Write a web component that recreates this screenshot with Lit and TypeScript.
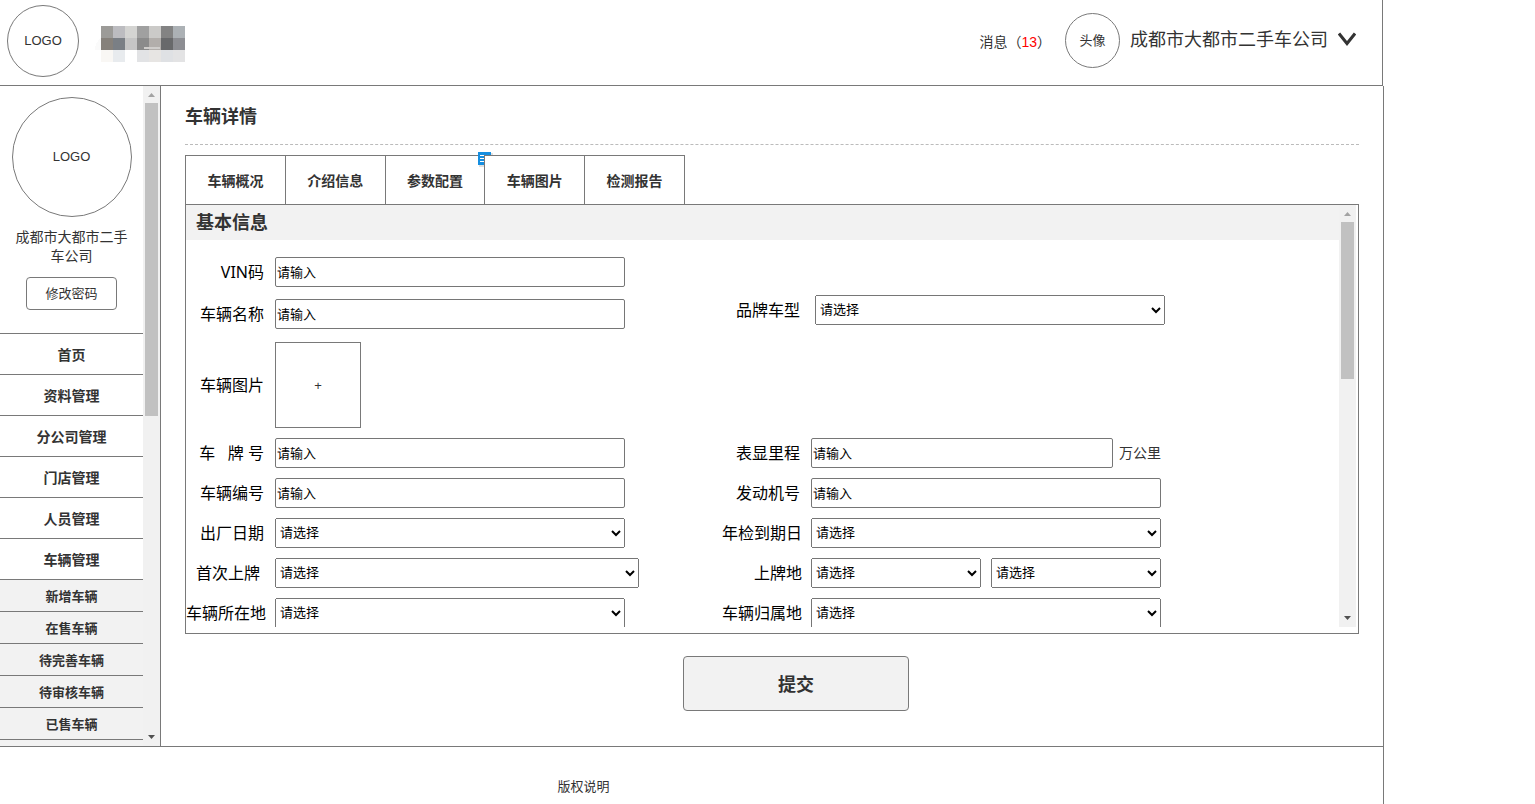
import { LitElement, html, svg, css, nothing } from "lit";
import { customElement, property } from "lit/decorators.js";
import { styleMap } from "lit/directives/style-map.js";
import { classMap } from "lit/directives/class-map.js";

@customElement("scroll-track")
class ScrollTrack extends LitElement {
  @property({ type: Number }) size = 40;

  static styles = css`
    :host {
      display: flex;
      flex-direction: column;
      flex: none;
      width: 17px;
      background: #f1f1f1;
    }
    .arrow {
      display: block;
      flex: none;
      width: 17px;
      height: 17px;
    }
    .rail {
      flex: 1;
      min-height: 0;
      padding: 0 2px;
    }
    .thumb {
      background: #c1c1c1;
    }
  `;

  render() {
    return html`
      <svg class="arrow" viewBox="0 0 17 17" aria-hidden="true"><path d="M5 11h7L8.500 7z" fill="#a3a3a3" /></svg>
      <div class="rail"><div class="thumb" style=${styleMap({ height: `${this.size}%` })}></div></div>
      <svg class="arrow" viewBox="0 0 17 17" aria-hidden="true"><path d="M5 6h7L8.500 10z" fill="#505050" /></svg>
    `;
  }
}

type Field = {
  id: string;
  label: string;
  kind: "text" | "select" | "pair" | "photo";
  unit?: string;
  look?: string;
};

const ROWS: { look?: string; left: Field; right?: Field }[] = [
  { left: { id: "vin", label: "VIN码", kind: "text" } },
  {
    look: "stagger",
    left: { id: "name", label: "车辆名称", kind: "text" },
    right: { id: "brand", label: "品牌车型", kind: "select", look: "inset" },
  },
  { look: "tall", left: { id: "photo", label: "车辆图片", kind: "photo" } },
  {
    left: { id: "plate", label: "车\u00a0\u00a0\u00a0牌\u00a0号", kind: "text" },
    right: { id: "mileage", label: "表显里程", kind: "text", unit: "万公里" },
  },
  {
    left: { id: "code", label: "车辆编号", kind: "text" },
    right: { id: "engine", label: "发动机号", kind: "text" },
  },
  {
    left: { id: "made", label: "出厂日期", kind: "select" },
    right: { id: "inspect", label: "年检到期日", kind: "select", look: "flush" },
  },
  {
    left: { id: "first", label: "首次上牌", kind: "select", look: "long" },
    right: { id: "region", label: "上牌地", kind: "pair", look: "flush" },
  },
  {
    left: { id: "place", label: "车辆所在地", kind: "select", look: "flush" },
    right: { id: "home", label: "车辆归属地", kind: "select", look: "flush" },
  },
];

const MOSAIC = [
  "#9c9b98", "#bcbcc0", "#d4d4d2", "#a0a0a0", "#cbcac8", "#838383", "#acb1b5",
  "#86817b", "#7a7f85", "#c5c5c5", "#8b8b8b", "#b2aeab", "#68696b", "#8d8e93",
  "#f9f7f4", "#e8ebee", "#ffffff", "#e2e3e5", "#e7e5e3", "#dfe1e4", "#e3e3e4",
];

const mosaicCell = (fill: string, i: number) =>
  svg`<rect x=${6 + (i % 7) * 12} y=${Math.floor(i / 7) * 12} width="12" height="12" fill=${fill} />`;

@customElement("app-root")
class AppRoot extends LitElement {
  static styles = css`
    :host {
      display: block;
      font-family: "Liberation Sans", "Noto Sans CJK SC", sans-serif;
      font-size: 14px;
      line-height: 20px;
      color: #333;
      background: #fff;
    }
    * {
      box-sizing: border-box;
    }
    a {
      color: inherit;
      text-decoration: none;
    }
    .page {
      display: flex;
      flex-direction: column;
      height: 100vh;
      min-width: 1200px;
      padding-right: 151px;
    }
    .top {
      display: flex;
      align-items: center;
      flex: none;
      height: 86px;
      margin-right: 1px;
      padding: 0 26px 4px 7px;
      border-right: 1px solid #797979;
      border-bottom: 1px solid #797979;
    }
    .disc {
      display: flex;
      align-items: center;
      justify-content: center;
      flex: none;
      border: 1px solid #797979;
      border-radius: 50%;
      font-size: 13px;
    }
    .logo {
      width: 72px;
      height: 72px;
    }
    .portrait {
      width: 120px;
      height: 120px;
    }
    .avatar {
      width: 55px;
      height: 55px;
      margin: 0 10px 0 14px;
    }
    .mosaic {
      width: 90px;
      height: 36px;
      margin: 6px 0 0 16px;
    }
    .news {
      margin-left: auto;
      padding-top: 2px;
    }
    .count {
      color: #f00;
    }
    .company {
      display: flex;
      align-items: center;
      gap: 10px;
      padding: 0 0 2px;
      border: 0;
      background: none;
      color: inherit;
      font: inherit;
      font-size: 18px;
      line-height: 24px;
    }
    .caret {
      width: 18px;
      height: 14px;
      margin-bottom: 2px;
    }
    .middle {
      display: flex;
      flex: 1;
      min-height: 0;
      border-right: 1px solid #797979;
      border-bottom: 1px solid #797979;
    }
    .side {
      display: flex;
      flex: none;
      width: 161px;
      border-right: 1px solid #797979;
    }
    .sidebody {
      display: flex;
      flex-direction: column;
      align-items: center;
      flex: 1;
      overflow: hidden;
      padding-top: 11px;
    }
    .owner {
      flex: none;
      width: 120px;
      margin: 11px 0;
      line-height: 19px;
      text-align: center;
    }
    .password {
      flex: none;
      width: 91px;
      height: 33px;
      margin-bottom: 23px;
      padding: 0;
      border: 1px solid #797979;
      border-radius: 4px;
      background: #fff;
      color: inherit;
      font: inherit;
      font-size: 13px;
    }
    .menu {
      flex: 1 0 auto;
      width: 100%;
      background: #f2f2f2;
      border-top: 1px solid #797979;
      text-align: center;
      font-weight: bold;
    }
    .item {
      display: block;
      height: 41px;
      padding-top: 11px;
      border-bottom: 1px solid #797979;
      background: #fff;
    }
    .sub {
      display: block;
      height: 32px;
      padding-top: 7px;
      border-bottom: 1px solid #797979;
      font-size: 13px;
    }
    .content {
      display: flex;
      flex-direction: column;
      flex: 1;
      min-width: 0;
      padding: 0 24px 35px;
    }
    .title {
      flex: none;
      margin: 0 0 10px;
      padding: 19px 0 15px;
      border-bottom: 1px dashed #bbb;
      font-size: 18px;
      line-height: 24px;
    }
    .tabs {
      display: flex;
      flex: none;
      width: 499px;
      height: 50px;
      margin-bottom: -1px;
    }
    .tab {
      position: relative;
      flex: 1;
      margin-right: -1px;
      padding: 2px 0 0;
      border: 1px solid #797979;
      background: #fff;
      color: inherit;
      font: inherit;
      font-weight: bold;
    }
    .note {
      position: absolute;
      top: -4px;
      right: -10px;
      width: 16px;
      height: 16px;
    }
    .panel {
      display: flex;
      flex: 1;
      min-height: 0;
      padding: 0 2px 6px 0;
      border: 1px solid #797979;
    }
    .form {
      flex: 1;
      min-width: 0;
      overflow: hidden;
    }
    .section {
      margin: 0 0 17px;
      padding: 6px 10px 5px;
      background: #f2f2f2;
      font-size: 18px;
      line-height: 24px;
    }
    .row {
      display: grid;
      grid-template-columns: 80px 438px 80px 350px;
      align-items: center;
      column-gap: 9px;
      margin-bottom: 10px;
      min-height: 30px;
    }
    .row.stagger {
      align-items: end;
      height: 34px;
      margin: -2px 0 13px;
    }
    .stagger > .inset {
      align-self: start;
    }
    .label {
      padding-right: 2px;
      color: #000;
      font-family: "Noto Sans", "Noto Sans CJK SC", sans-serif;
      font-size: 16px;
      line-height: 30px;
      text-align: right;
      white-space: nowrap;
    }
    .label.flush {
      padding-right: 0;
    }
    .label.long {
      padding-right: 6px;
    }
    .field {
      display: flex;
      align-items: center;
      gap: 6px;
      width: 350px;
    }
    .field.long {
      width: 364px;
    }
    .field.inset {
      margin-left: 4px;
    }
    .field.pair {
      gap: 10px;
    }
    .text,
    .pick {
      flex: 1;
      min-width: 0;
      height: 30px;
      margin: 0;
      color: #000;
      font-family: "Liberation Sans", "Noto Sans CJK SC", sans-serif;
      font-size: 13px;
    }
    .pick {
      padding-bottom: 2px;
    }
    .text {
      padding: 0 1px 1px;
      border: 1px solid #767676;
      border-radius: 2px;
      background: #fff;
    }
    .photo {
      width: 86px;
      height: 86px;
      padding: 2px 0 0;
      border: 1px solid #797979;
      background: #fff;
      color: inherit;
      font: inherit;
      font-size: 13px;
    }
    .submit {
      flex: none;
      align-self: center;
      width: 226px;
      height: 55px;
      margin: 22px 0 0 48px;
      padding: 2px 0 0;
      border: 1px solid #797979;
      border-radius: 4px;
      background: #f2f2f2;
      color: inherit;
      font: inherit;
      font-size: 18px;
      font-weight: bold;
    }
    .foot {
      flex: none;
      height: 57px;
      padding: 30px 216px 0 0;
      border-right: 1px solid #797979;
      font-size: 13px;
      text-align: center;
    }
  `;

  private control(f: Field) {
    const pick = (id: string, name: string | typeof nothing = nothing) =>
      html`<select class="pick" id=${id} aria-label=${name}><option>请选择</option></select>`;
    switch (f.kind) {
      case "text":
        return html`<input class="text" id=${f.id} type="text" value="请输入" />${f.unit ? html`<span>${f.unit}</span>` : nothing}`;
      case "select":
        return pick(f.id);
      case "pair":
        return html`${pick(f.id)}${pick(`${f.id}-city`, f.label)}`;
      case "photo":
        return html`<button class="photo" id=${f.id} type="button">+</button>`;
    }
  }

  private cell(f: Field) {
    const look = f.look ? { [f.look]: true } : {};
    return html`
      <label class=${classMap({ label: true, ...look })} for=${f.id}>${f.label}</label>
      <div class=${classMap({ field: true, pair: f.kind === "pair", ...look })}>${this.control(f)}</div>
    `;
  }

  render() {
    return html`
      <div class="page">
        <header class="top">
          <div class="disc logo">LOGO</div>
          <svg class="mosaic" viewBox="0 0 90 36" shape-rendering="crispEdges" aria-hidden="true">
            <path d="M6 12v12H0q0-8 6-12z" fill="#fafafa" />
            ${MOSAIC.map(mosaicCell)}
            <path d="M49 21h16v2H49z" fill="#cfcdcb" />
          </svg>
          <a class="news" href="#">消息（<span class="count">13</span>）</a>
          <div class="disc avatar">头像</div>
          <button class="company" type="button">
            成都市大都市二手车公司
            <svg class="caret" viewBox="0 0 18 14" aria-hidden="true">
              <path d="M1 1.500L9 11.500L17 1.500" fill="none" stroke="#333" stroke-width="3" />
            </svg>
          </button>
        </header>

        <div class="middle">
          <aside class="side">
            <div class="sidebody">
              <div class="disc portrait">LOGO</div>
              <div class="owner">成都市大都市二手车公司</div>
              <button class="password" type="button">修改密码</button>
              <nav class="menu">
                ${["首页", "资料管理", "分公司管理", "门店管理", "人员管理", "车辆管理"].map(
                  (t) => html`<a class="item" href="#">${t}</a>`
                )}
                ${["新增车辆", "在售车辆", "待完善车辆", "待审核车辆", "已售车辆"].map(
                  (t) => html`<a class="sub" href="#">${t}</a>`
                )}
              </nav>
            </div>
            <scroll-track .size=${50}></scroll-track>
          </aside>

          <main class="content">
            <h1 class="title">车辆详情</h1>
            <div class="tabs">
              ${["车辆概况", "介绍信息", "参数配置", "车辆图片", "检测报告"].map(
                (t, i) => html`<button class="tab" type="button">
                  ${t}${i === 2
                    ? html`<svg class="note" viewBox="0 0 16 16" aria-hidden="true">
                        <path d="M1 1h14v14H1z" fill="#000" opacity=".12" />
                        <path d="M0 0h13v13H0z" fill="#158ee0" />
                        <path d="M2 3.500h9M2 6.500h9M2 9.500h9" stroke="#fff" />
                      </svg>`
                    : nothing}
                </button>`
              )}
            </div>
            <div class="panel">
              <form class="form">
                <h2 class="section">基本信息</h2>
                ${ROWS.map(
                  (r) => html`<div class=${classMap({ row: true, ...(r.look ? { [r.look]: true } : {}) })}>
                    ${this.cell(r.left)}${r.right ? this.cell(r.right) : nothing}
                  </div>`
                )}
              </form>
              <scroll-track .size=${40.5}></scroll-track>
            </div>
            <button class="submit" type="button">提交</button>
          </main>
        </div>

        <footer class="foot">版权说明</footer>
      </div>
    `;
  }
}
